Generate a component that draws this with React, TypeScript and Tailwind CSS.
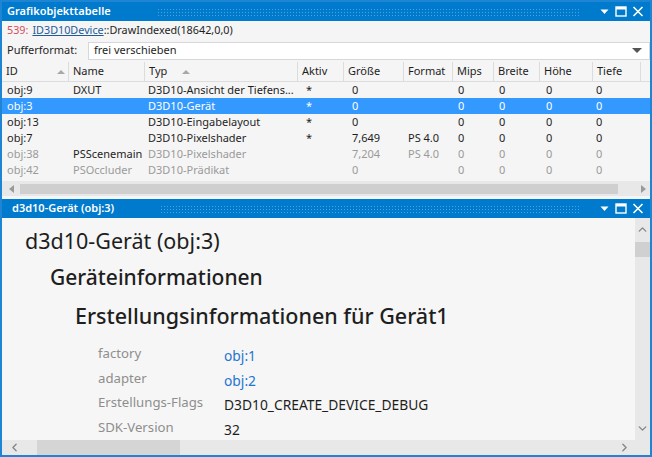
import { ChevronLeft, ChevronRight, ChevronUp, ChevronDown } from 'lucide-react'

const font = "font-['Noto_Sans','Open_Sans',sans-serif]"

const cols = [
  { label: 'ID', sort: true },
  { label: 'Name' },
  { label: 'Typ', sort: true },
  { label: 'Aktiv' },
  { label: 'Größe' },
  { label: 'Format' },
  { label: 'Mips' },
  { label: 'Breite' },
  { label: 'Höhe' },
  { label: 'Tiefe' },
  { label: '' },
]

const gridCols = 'grid grid-cols-[67px_76px_153px_46px_60px_49px_41px_46px_53px_48px_1fr]'

type Row = {
  id: string
  name: string
  typ: string
  aktiv: string
  size: string
  format: string
  selected?: boolean
  dim?: boolean
  nameDark?: boolean
}

const rows: Row[] = [
  { id: 'obj:9', name: 'DXUT', typ: 'D3D10-Ansicht der Tiefens...', aktiv: '*', size: '0', format: '' },
  { id: 'obj:3', name: '', typ: 'D3D10-Gerät', aktiv: '*', size: '0', format: '', selected: true },
  { id: 'obj:13', name: '', typ: 'D3D10-Eingabelayout', aktiv: '*', size: '0', format: '' },
  { id: 'obj:7', name: '', typ: 'D3D10-Pixelshader', aktiv: '*', size: '7,649', format: 'PS 4.0' },
  { id: 'obj:38', name: 'PSScenemain', typ: 'D3D10-Pixelshader', aktiv: '', size: '7,204', format: 'PS 4.0', dim: true, nameDark: true },
  { id: 'obj:42', name: 'PSOccluder', typ: 'D3D10-Prädikat', aktiv: '', size: '0', format: '', dim: true },
]

const props = [
  { k: 'factory', v: 'obj:1', link: true },
  { k: 'adapter', v: 'obj:2', link: true },
  { k: 'Erstellungs-Flags', v: 'D3D10_CREATE_DEVICE_DEBUG' },
  { k: 'SDK-Version', v: '32' },
]

function TitleBar({ title, left }: { title: string; left: string }) {
  return (
    <div className="h-[19px] bg-[#007acc] flex items-center text-white">
      <span className={`${left} text-[11px] font-semibold whitespace-nowrap`}>{title}</span>
      <div className="flex-1 ml-[46px] h-[8px] bg-[radial-gradient(circle,#4da3dd_0.7px,transparent_1px)] bg-[length:3px_3px] mr-[18px]" />
      <div className="flex items-center gap-[5px] pr-[6px]">
        <svg width="11" height="11" viewBox="0 0 11 11"><path d="M1.5 3.5h8l-4 4.5z" fill="white" /></svg>
        <svg width="12" height="11" viewBox="0 0 12 11"><rect x="1" y="1" width="10" height="9" fill="none" stroke="white" strokeWidth="1.4" /><rect x="1" y="1" width="10" height="2.5" fill="white" /></svg>
        <svg width="12" height="11" viewBox="0 0 12 11"><path d="M1.5 1l9 9M10.5 1l-9 9" stroke="white" strokeWidth="1.6" /></svg>
      </div>
    </div>
  )
}

export default function App() {
  return (
    <div className={`${font} w-[652px] h-[457px] border-2 border-[#1e84d4] bg-[#f5f5f5] flex flex-col overflow-hidden text-[#1e1e1e]`}>
      <TitleBar title="Grafikobjekttabelle" left="pl-[5px]" />

      <div className="h-[19px] flex items-center pl-[5px] text-[10.8px] whitespace-nowrap">
        <span className="text-[#d2505c]">539:</span>
        <span className="ml-[4px] text-[#1f5b99] underline">ID3D10Device</span>
        <span>::DrawIndexed(18642,0,0)</span>
      </div>

      <div className="h-[21px] flex items-center text-[11px]">
        <span className="pl-[5px] w-[86px]">Pufferformat:</span>
        <div className="flex-1 h-[18px] bg-white border border-[#d6d6dc] flex items-center pl-[5px]">
          <span className="flex-1">frei verschieben</span>
          <svg width="10" height="6" viewBox="0 0 10 6" className="mr-[7px]"><path d="M0 0h10L5 5z" fill="#555" /></svg>
        </div>
      </div>

      <div className={`${gridCols} h-[20px] items-center text-[11px] border-b border-[#dcdcdc] mt-[1px]`}>
        {cols.map((c, i) => (
          <div key={i} className="h-full flex items-center pl-[4px] pr-[3px] border-r border-[#dcdcdc] last:border-r-0">
            <span className="flex-1 whitespace-nowrap">{c.label}</span>
            {c.sort && (
              <svg width="8" height="5" viewBox="0 0 8 5" className={c.label === 'Typ' ? 'mr-[104px]' : ''}><path d="M0 5L4 1L8 5z" fill="#a8a8a8" /></svg>
            )}
          </div>
        ))}
      </div>

      <div className="flex flex-col text-[11px]">
        {rows.map((r) => {
          const base = r.selected ? 'bg-[#3399ff] text-white' : r.dim ? 'text-[#9a9a9a]' : ''
          return (
            <div key={r.id} className={`${gridCols} h-[16px] items-center whitespace-nowrap ${base}`}>
              <div className="pl-[5px]">{r.id}</div>
              <div className={`pl-[4px] ${r.nameDark ? 'text-[#1e1e1e]' : ''}`}>{r.name}</div>
              <div className="pl-[3px] overflow-hidden">{r.typ}</div>
              <div className="pl-[8px]">{r.aktiv}</div>
              <div className="pl-[8px]">{r.size}</div>
              <div className="pl-[4px]">{r.format}</div>
              <div className="pl-[5px]">0</div>
              <div className="pl-[5px]">0</div>
              <div className="pl-[6px]">0</div>
              <div className="pl-[3px]">0</div>
              <div />
            </div>
          )
        })}
      </div>

      <div className="mt-[3px] h-[15px] bg-[#e8e8e8] flex items-center">
        <svg width="5" height="8" viewBox="0 0 5 8" className="ml-[7px]"><path d="M5 0v8L0 4z" fill="#9a9a9a" /></svg>
        <div className="h-[10px] bg-[#cfcfcf] w-[598px] ml-[6px]" />
        <div className="flex-1" />
        <svg width="5" height="8" viewBox="0 0 5 8" className="mr-[4px]"><path d="M0 0v8l5-4z" fill="#9a9a9a" /></svg>
      </div>

      <div className="mt-[3px]">
        <TitleBar title="d3d10-Gerät (obj:3)" left="pl-[10px]" />
      </div>

      <div className="flex-1 flex flex-col min-h-0 bg-[#f6f6f6]">
        <div className="flex-1 flex min-h-0">
          <div className="flex-1 min-h-0 overflow-hidden pl-[23px] pt-[9px]">
            <div className="text-[21.5px] leading-[28px]">d3d10-Gerät (obj:3)</div>
            <div className="text-[21px] leading-[28px] font-medium pl-[25px] mt-[8px]">Geräteinformationen</div>
            <div className="text-[21.5px] leading-[28px] font-medium pl-[50px] mt-[11px]">Erstellungsinformationen für Gerät1</div>
            <div className="pl-[73px] mt-[14px] flex flex-col">
              {props.map((p) => (
                <div key={p.k} className="flex h-[24.5px] items-start whitespace-nowrap">
                  <span className="w-[126px] text-[13.2px] text-[#8e8e8e]">{p.k}</span>
                  <span className={`mt-[2px] text-[13.8px] ${p.link ? 'text-[#1e74d0]' : ''}`}>{p.v}</span>
                </div>
              ))}
            </div>
          </div>
          <div className="w-[15px] bg-[#e8e8e8] flex flex-col items-center">
            <ChevronUp size={13} strokeWidth={2.5} className="text-[#868686] mt-[5px]" />
            <div className="w-full h-[15px] bg-[#d0d0d0] mt-[6px]" />
            <div className="flex-1" />
            <ChevronDown size={13} strokeWidth={2.5} className="text-[#868686] mb-[5px]" />
          </div>
        </div>
        <div className="h-[15px] bg-[#e8e8e8] flex items-center">
          <ChevronLeft size={13} strokeWidth={2.5} className="text-[#868686] ml-[6px]" />
          <div className="h-[15px] bg-[#d5d5d5] w-[143px] ml-[16px]" />
          <div className="flex-1" />
          <ChevronRight size={13} strokeWidth={2.5} className="text-[#868686] mr-[19px]" />
        </div>
      </div>
    </div>
  )
}
